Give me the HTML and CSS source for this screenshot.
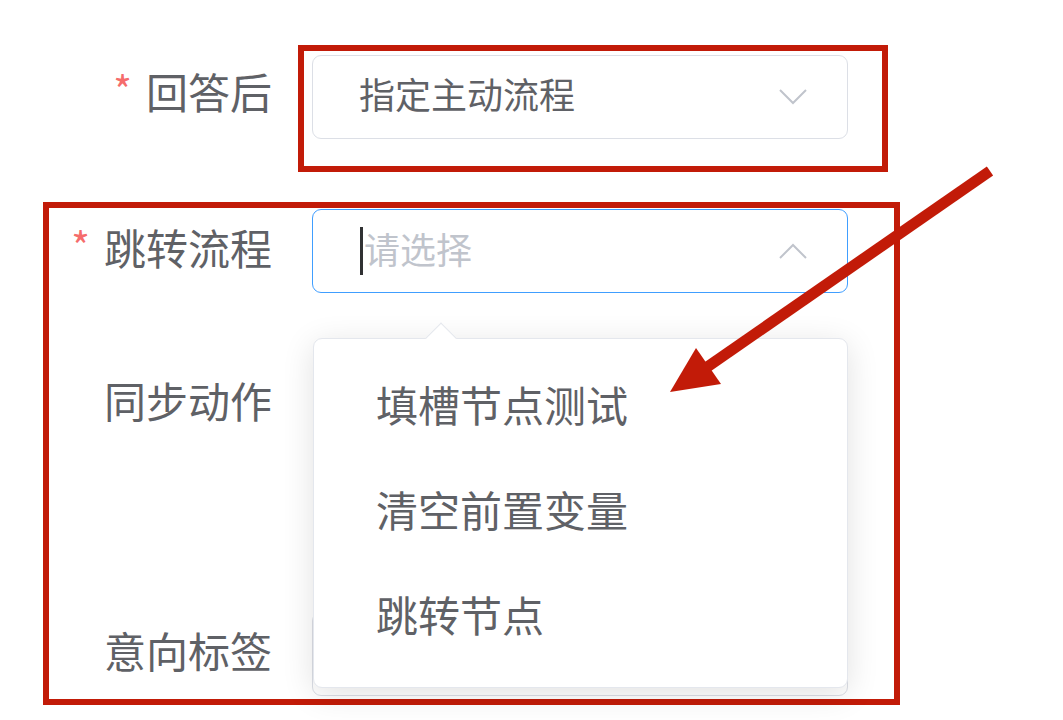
FILE: index.html
```html
<!DOCTYPE html>
<html lang="zh-CN">
<head>
<meta charset="utf-8">
<title>表单</title>
<link rel="stylesheet" href="styles.css">
</head>
<body>
<div class="page">
  <div class="row row-first">
    <div class="label"><span class="req">*</span>回答后</div>
    <div class="mark mark-one">
      <div class="select">
        <span class="value">指定主动流程</span>
        <svg class="chev" width="28" height="18" viewBox="0 0 28 18"><polyline points="1,2 14,15 27,2" fill="none" stroke="#c0c4cc" stroke-width="2"/></svg>
      </div>
    </div>
  </div>

  <div class="mark mark-two">
    <div class="row">
      <div class="label label-inner"><span class="req">*</span>跳转流程</div>
      <div class="select select-focus">
        <span class="caret"></span><span class="placeholder">请选择</span>
        <svg class="chev" width="28" height="18" viewBox="0 0 28 18"><polyline points="1,16 14,3 27,16" fill="none" stroke="#c0c4cc" stroke-width="2"/></svg>
      </div>
    </div>
    <div class="row row-sync">
      <div class="label label-inner">同步动作</div>
      <div class="sync-body"></div>
    </div>
    <div class="row">
      <div class="label label-inner">意向标签</div>
      <div class="select"></div>
    </div>
  </div>

  <div class="dropdown">
    <div class="pointer"></div>
    <ul class="options">
      <li>填槽节点测试</li>
      <li>清空前置变量</li>
      <li>跳转节点</li>
    </ul>
  </div>

  <svg class="annot-arrow" width="1063" height="720" viewBox="0 0 1063 720">
    <line x1="990" y1="171" x2="700" y2="372" stroke="#c21b08" stroke-width="11" stroke-linecap="butt"/>
    <polygon points="670,392 696,348 721,384" fill="#c21b08"/>
  </svg>
</div>
</body>
</html>
```
FILE: styles.css
```css
* { box-sizing: border-box; }
html, body { margin: 0; padding: 0; background: #ffffff; }
body {
  font-family: "Noto Sans CJK SC", "Noto Sans", sans-serif;
  color: #5f6166;
  width: 1063px;
  height: 720px;
  overflow: hidden;
}
.page {
  position: relative;
  width: 1063px;
  height: 720px;
  padding-top: 45px;
}
.row {
  display: flex;
  align-items: flex-start;
}
.row-first {
  padding-left: 48px;
}
.label {
  width: 224px;
  height: 85px;
  line-height: 75px;
  text-align: right;
  font-size: 42px;
  color: #5f6166;
  white-space: nowrap;
}
.row-first .label {
  margin-top: 10px;
  line-height: 72px;
}
.label-inner {
  width: 223px;
  margin-right: 40px;
}
.req {
  color: #f56c6c;
  margin-right: 14px;
  font-size: 40px;
  position: relative;
  top: -3px;
}
.mark {
  border: 6px solid #c21b08;
}
.mark-one {
  margin-left: 26px;
  width: 590px;
  height: 127px;
  padding: 4px 34px 0 8px;
}
.mark-two {
  margin-left: 43px;
  margin-top: 30px;
  width: 857px;
  height: 503px;
  padding: 1px 0 0 0;
}
.select {
  width: 536px;
  height: 84px;
  border: 1.5px solid #dcdfe6;
  border-radius: 9px;
  display: flex;
  align-items: center;
  padding: 0 40px 0 46px;
  background: #fff;
}
.select-focus {
  border-color: #409eff;
}
.value {
  font-size: 36px;
  color: #5f6166;
  flex: 1;
  padding-bottom: 9px;
}
.placeholder {
  font-size: 36px;
  color: #c0c4cc;
  flex: 1;
  padding-bottom: 7px;
}
.caret {
  display: inline-block;
  width: 3px;
  height: 48px;
  background: #303133;
  margin-left: 1px;
  margin-right: 1px;
}
.chev { flex: none; }
.row-sync {
  margin-top: 68px;
  height: 182px;
  margin-bottom: 68px;
}
.sync-body { flex: 1; }
.dropdown {
  position: absolute;
  left: 313px;
  top: 338px;
  width: 535px;
  height: 350px;
  background: #fff;
  border: 1.5px solid #e4e7ed;
  border-radius: 9px;
  box-shadow: 0 6px 32px rgba(0, 0, 0, 0.12);
}
.pointer {
  position: absolute;
  left: 116px;
  top: -12px;
  width: 22px;
  height: 22px;
  background: #fff;
  border-top: 1.5px solid #e4e7ed;
  border-left: 1.5px solid #e4e7ed;
  transform: rotate(45deg);
}
.options {
  list-style: none;
  margin: 0;
  padding: 17px 0;
  position: relative;
}
.options li {
  height: 105px;
  line-height: 95px;
  padding-left: 62px;
  font-size: 42px;
  color: #5f6166;
}
.annot-arrow {
  position: absolute;
  left: 0;
  top: 0;
  pointer-events: none;
}
```
